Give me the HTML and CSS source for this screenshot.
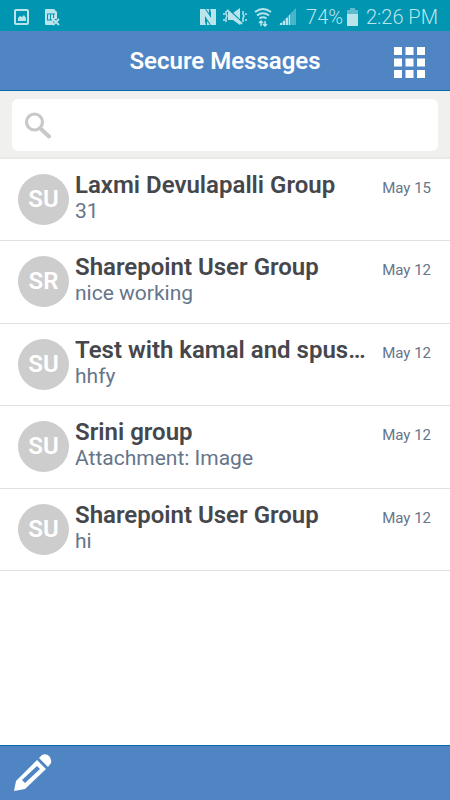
FILE: index.html
```html
<!DOCTYPE html>
<html lang="en">
<head>
  <meta charset="UTF-8">
  <meta name="viewport" content="width=device-width, initial-scale=1.0">
  <title>Secure Messages</title>
  <link rel="stylesheet" href="styles.css">
</head>
<body>

<div class="status-bar">
  <div class="status-left">
    <svg width="16" height="18" viewBox="0 0 16 18" fill="none">
      <rect x="1" y="2" width="13" height="14" rx="1" stroke="currentColor" stroke-width="2"/>
      <path d="M4 13V10l2-2 2 1 2-2 2 3v3z" fill="currentColor"/>
    </svg>
    <svg width="16" height="18" viewBox="0 0 16 18">
      <path d="M2 1h8l3 3v7l-3 0-1 6H2a1 1 0 0 1-1-1V2a1 1 0 0 1 1-1z" fill="currentColor"/>
      <path d="M3 6h8M3 12h5M3.500 6v6M6.500 6v6M9.500 6v4" stroke="#0096b2" stroke-width="1"/>
      <path d="M9 11l6 6M15 11l-6 6" stroke="currentColor" stroke-width="1.800"/>
    </svg>
  </div>
  <div class="status-right">
    <svg width="16" height="18" viewBox="0 0 16 18">
      <path d="M0 1h5l6 9V4l-1-3h6v16h-5L5 8v6l1 3H0z" fill="currentColor"/>
      <path d="M6 1h3v4zM10 17H7v-4z" fill="currentColor"/>
    </svg>
    <svg width="24" height="18" viewBox="0 0 24 18" fill="none" stroke="currentColor">
      <path d="M5 5h5l7-5v17l-7-5H5z" fill="currentColor" stroke="none"/>
      <path d="M5 1l14 13" stroke="#0096b2" stroke-width="1.500"/>
      <path d="M4 2l15 14" stroke-width="2"/>
      <path d="M3 3v3l1 2-1 2v4M1 5v2M1 11v2M20 3v3l1 2-1 2v4M23 5v2M23 11v2" stroke-width="1.500"/>
    </svg>
    <svg width="18" height="20" viewBox="0 0 18 20" fill="none" stroke="currentColor" stroke-width="2">
      <path d="M1 5q8-6 16 0M3 8.500q6-4.500 12 0M5.500 11.500q3.500-2.500 7 0"/>
      <path d="M7 19v-5M5 16l2-2 2 2M11 14v5M9 17l2 2 2-2" stroke-width="1.500"/>
    </svg>
    <svg width="17" height="18" viewBox="0 0 17 18" fill="currentColor">
      <path d="M17 0v17H0z" opacity="0.4"/>
      <path d="M1 15h2v2H1zM4 13h2v4H4zM7 10h2v7H7zM10 7h1v10h-1z"/>
    </svg>
    <span class="battery-level">74%</span>
    <svg width="12" height="18" viewBox="0 0 12 18" fill="currentColor">
      <path d="M3 0h5v2h3v4H0V2h3z" opacity="0.5"/>
      <path d="M0 6h11v12H0z"/>
    </svg>
    <span class="clock">2:26 PM</span>
  </div>
</div>

<header class="app-header">
  <h1>Secure Messages</h1>
  <button class="icon-button menu-button" type="button" aria-label="Menu">
    <svg width="31" height="31" viewBox="0 0 31 31" fill="#fff">
      <path d="M0 0h8v8H0zM11.500 0h8v8h-8zM23 0h8v8h-8zM0 11.500h8v8H0zM11.500 11.500h8v8h-8zM23 11.500h8v8h-8zM0 23h8v8H0zM11.500 23h8v8h-8zM23 23h8v8h-8z"/>
    </svg>
  </button>
</header>

<form class="search" role="search">
  <label class="search-box">
    <svg width="28" height="27" viewBox="0 0 28 27" fill="none" stroke="#c8c8c8">
      <circle cx="10.500" cy="10" r="8" stroke-width="3.200"/>
      <path d="M17 17l8 7.500" stroke-width="4" stroke-linecap="round"/>
    </svg>
    <input type="search" aria-label="Search messages">
  </label>
</form>

<main>
  <ul class="message-list">
    <li class="message">
      <span class="avatar">SU</span>
      <div class="message-text">
        <h2>Laxmi Devulapalli Group</h2>
        <p>31</p>
      </div>
      <time>May 15</time>
    </li>
    <li class="message">
      <span class="avatar">SR</span>
      <div class="message-text">
        <h2>Sharepoint User Group</h2>
        <p>nice working</p>
      </div>
      <time>May 12</time>
    </li>
    <li class="message">
      <span class="avatar">SU</span>
      <div class="message-text">
        <h2>Test with kamal and spus…</h2>
        <p>hhfy</p>
      </div>
      <time>May 12</time>
    </li>
    <li class="message">
      <span class="avatar">SU</span>
      <div class="message-text">
        <h2>Srini group</h2>
        <p>Attachment: Image</p>
      </div>
      <time>May 12</time>
    </li>
    <li class="message">
      <span class="avatar">SU</span>
      <div class="message-text">
        <h2>Sharepoint User Group</h2>
        <p>hi</p>
      </div>
      <time>May 12</time>
    </li>
  </ul>
</main>

<footer class="toolbar">
  <button class="icon-button" type="button" aria-label="New message">
    <svg width="38" height="38" viewBox="0 0 38 38" fill="#fff">
      <path fill-rule="evenodd" d="M0 37L2 27 23 6l9 9L11 35zM8 26l3 3 15-14-3-3z"/>
      <path d="M25 4l3-3q4-2 7 1t2 7l-3 4z"/>
    </svg>
  </button>
</footer>

</body>
</html>
```

FILE: styles.css
```css
:root {
  --status: #0096b2;
  --primary: #5085c4;
  --primary-dark: #0868ae;
  --line: #e0e0e0;
  --dark: #45474c;
  --muted: #66758a;
}

* {
  box-sizing: border-box;
}

body {
  margin: 0;
  min-height: 100vh;
  display: flex;
  flex-direction: column;
  font-family: Roboto, sans-serif;
  background: white;
}

h1, h2, p, ul {
  margin: 0;
  padding: 0;
}

svg {
  display: block;
  flex: none;
}

.status-bar {
  display: flex;
  align-items: center;
  justify-content: space-between;
  height: 31px;
  padding: 2px 12px 0 14px;
  background: var(--status);
  color: #b9e4ec;
  font-size: 20px;
  font-weight: 300;
}

.status-left {
  display: flex;
  gap: 14px;
}

.status-right {
  display: flex;
  align-items: center;
  gap: 7px;
}

.battery-level {
  margin: 0 -3px 0 3px;
}

.icon-button {
  padding: 0;
  border: none;
  background: none;
  cursor: pointer;
}

.app-header {
  display: grid;
  grid-template-columns: 1fr auto 1fr;
  align-items: center;
  height: 60px;
  padding: 3px 25px 0;
  background: var(--primary);
  border-bottom: 1px solid var(--primary-dark);
  color: white;
}

.app-header h1 {
  grid-column: 2;
  padding-bottom: 2px;
  font-size: 24px;
  font-weight: 600;
  line-height: 28px;
}

.menu-button {
  justify-self: end;
}

.search {
  padding: 8px 12px 6px;
  background: #f0f0ee;
  border-bottom: 2px solid #e9e9e9;
}

.search-box {
  display: flex;
  align-items: center;
  gap: 8px;
  height: 52px;
  padding: 0 12px;
  border-radius: 6px;
  background: white;
}

.search-box input {
  flex: 1;
  min-width: 0;
  border: none;
  outline: none;
  background: none;
  font: inherit;
  font-size: 22px;
  color: var(--dark);
}

main {
  flex: 1;
}

.message-list {
  display: grid;
  grid-auto-rows: 1fr;
  min-height: 412px;
  list-style: none;
}

.message {
  display: flex;
  gap: 6px;
  padding: 13px 19px 13px 18px;
  border-bottom: 1px solid var(--line);
}

.avatar {
  flex: none;
  width: 51px;
  height: 51px;
  margin-top: 2px;
  border-radius: 50%;
  background: #cdcdcd;
  color: white;
  font-size: 24px;
  font-weight: 600;
  line-height: 50px;
  text-align: center;
}

.message-text {
  flex: 1;
  min-width: 0;
}

.message-text h2 {
  overflow: hidden;
  text-overflow: ellipsis;
  white-space: nowrap;
  color: var(--dark);
  font-size: 24px;
  font-weight: 600;
  line-height: 26px;
}

.message-text p {
  color: var(--muted);
  font-size: 21px;
  line-height: 26px;
}

.message time {
  color: var(--muted);
  font-size: 15px;
  line-height: 32px;
}

.toolbar {
  display: flex;
  align-items: center;
  height: 55px;
  padding: 0 14px;
  background: var(--primary);
  border-top: 1px solid var(--primary-dark);
}
```
